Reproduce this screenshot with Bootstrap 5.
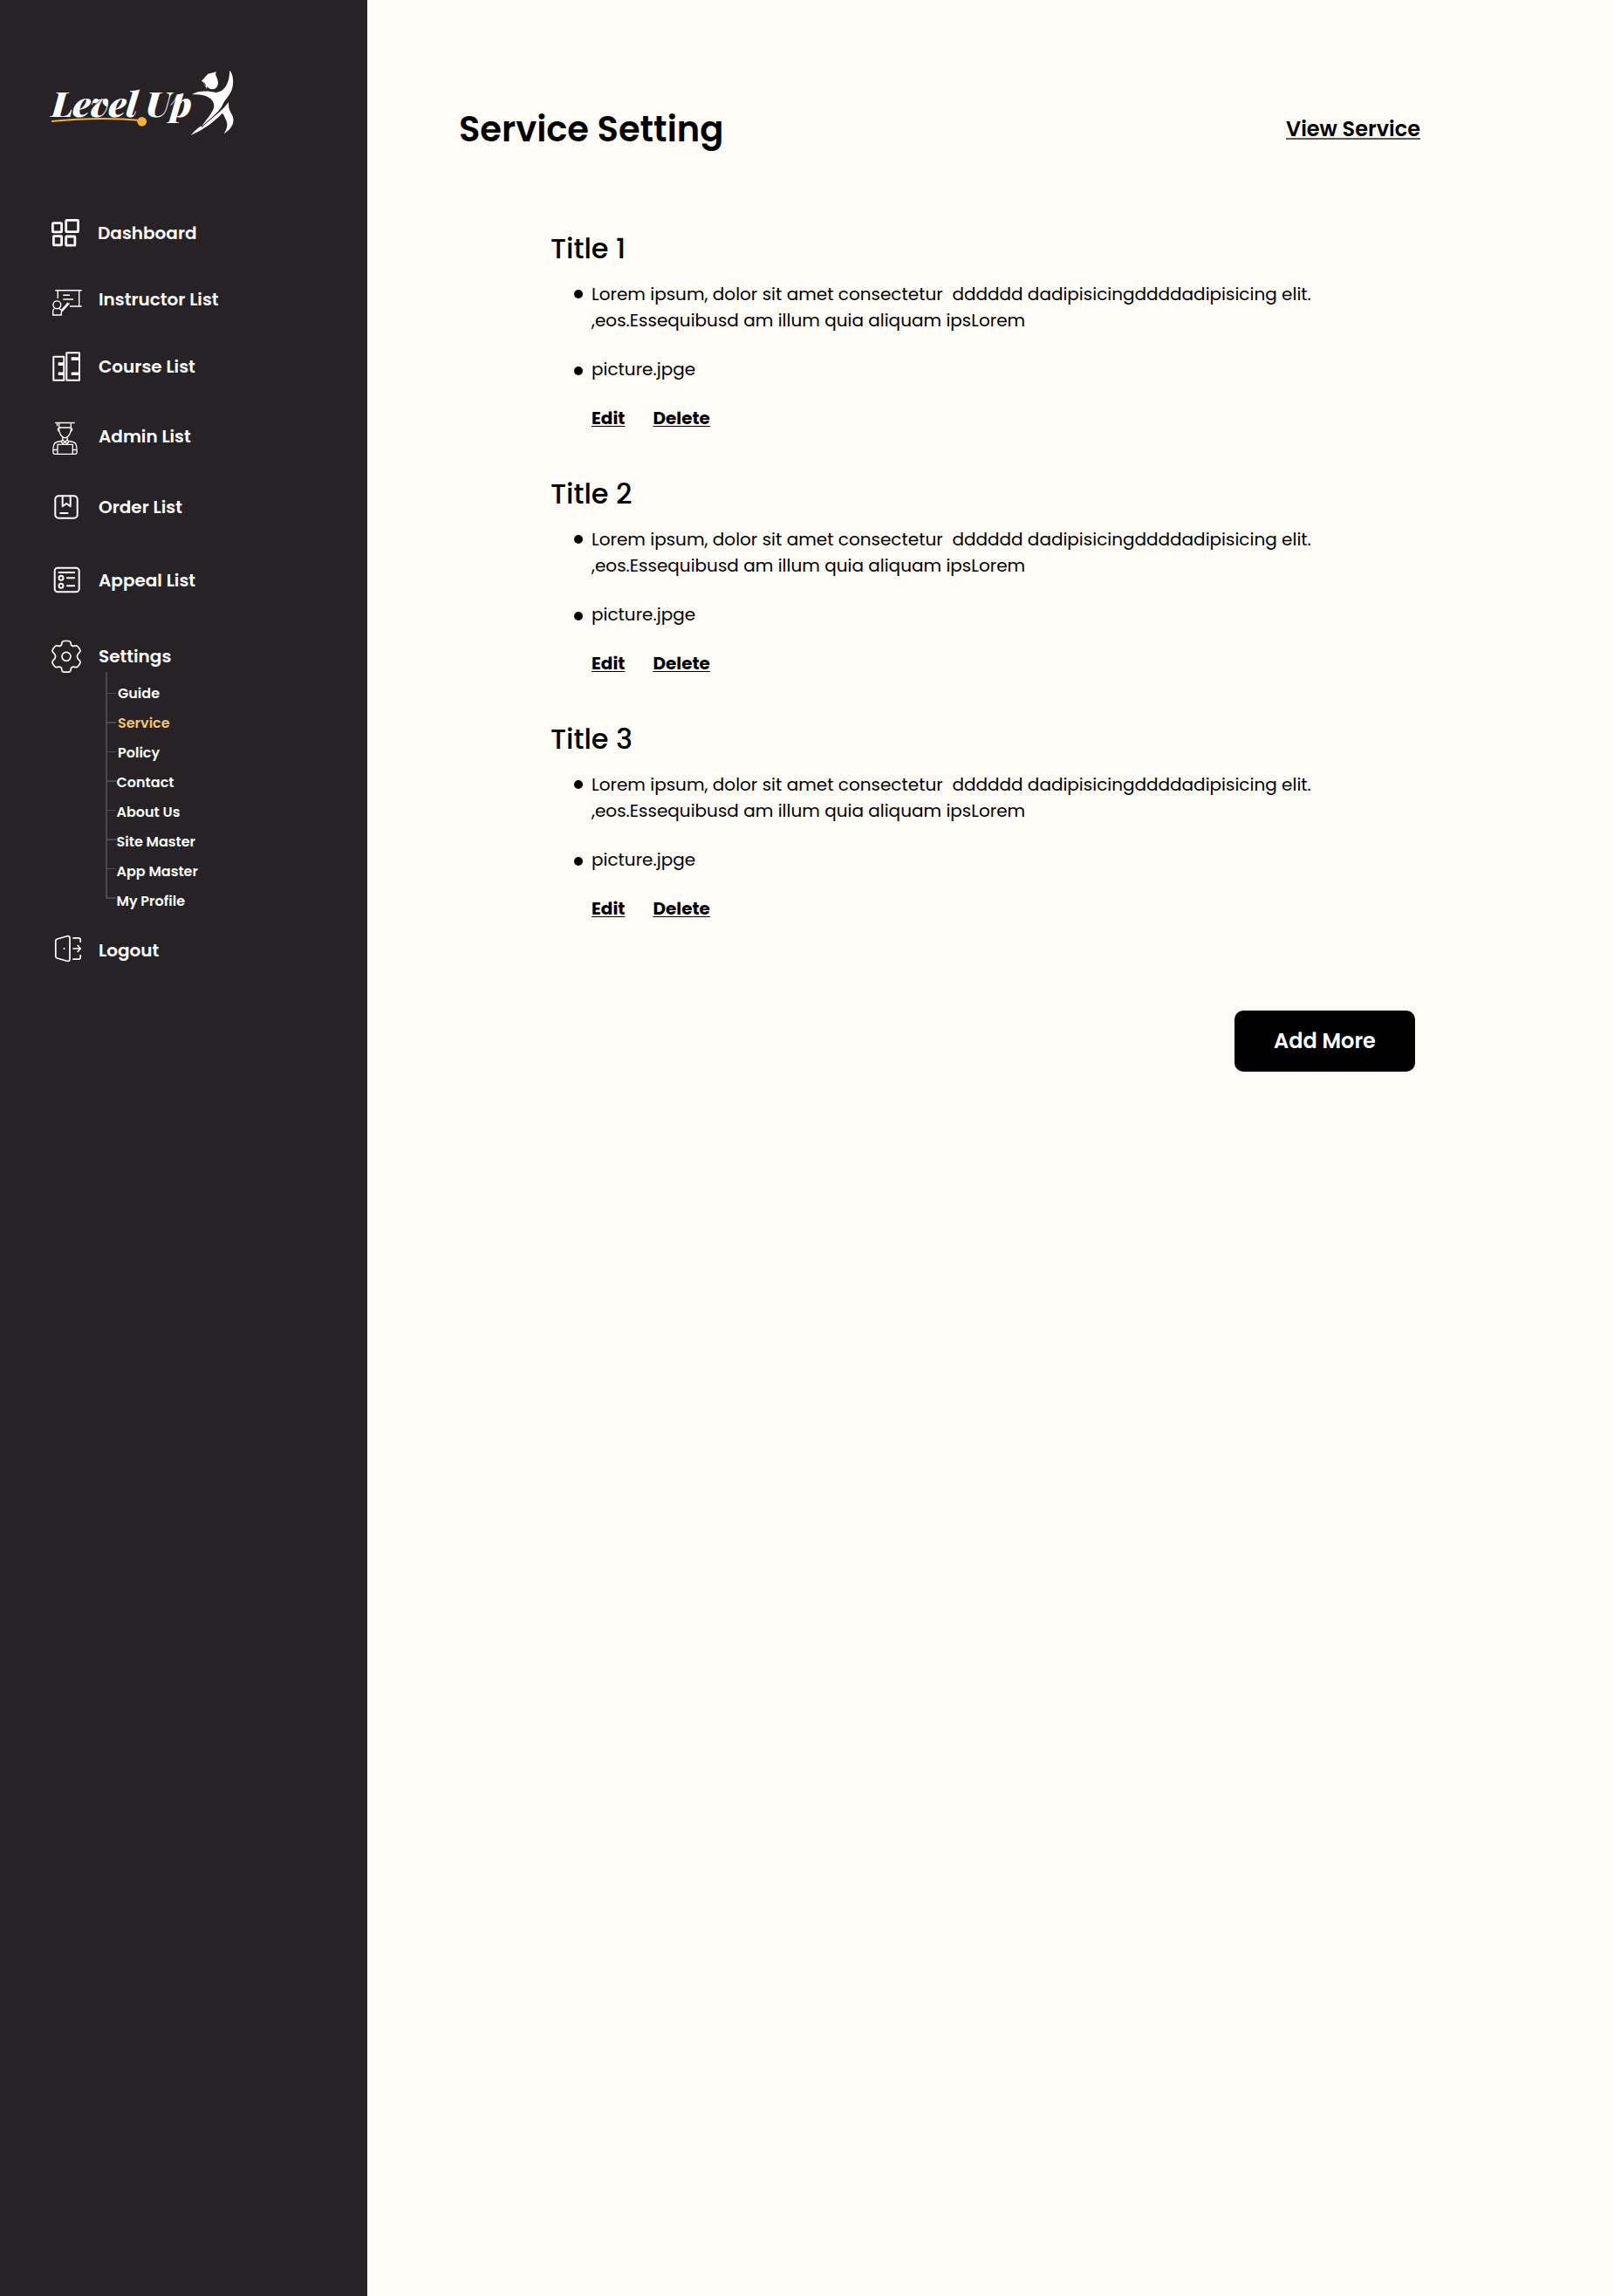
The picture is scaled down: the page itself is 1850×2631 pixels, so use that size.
<!DOCTYPE html>
<html lang="en">
<head>
<meta charset="utf-8">
<meta name="viewport" content="width=device-width, initial-scale=1">
<title>Service Setting</title>
<link rel="stylesheet" href="https://cdn.jsdelivr.net/npm/bootstrap@5.3.0/dist/css/bootstrap.min.css">
<style>
body{font-family:Poppins,Inter,sans-serif;background:#fffbf6;color:#000}
.side-panel{width:421px;min-height:2631px;background:#262226;padding:78px 0 0 57px}
.brand-logo{display:block;width:214px;height:80px;margin-bottom:89px}
.side-link{height:40px;gap:19px;padding-left:1px;color:#fff;font-size:20px;font-weight:600;line-height:30px;text-decoration:none}
.side-link.tight{gap:18px}
.side-link svg{width:36px;height:40px;flex:none;overflow:visible;fill:none;stroke:#fff;stroke-width:2}
.g36{margin-bottom:36px}.g37{margin-bottom:37px}.g40{margin-bottom:40px}.g41{margin-bottom:41px}.g44{margin-bottom:44px}.g47{margin-bottom:47px}
.tree-lines{width:14px;height:260px;margin:-2px 0 0 64px;flex:none;fill:#4b494b}
.sub-menu{margin:6px 0 19px -1.5px}
.sub-menu a{display:block;color:#fff;font-size:16px;font-weight:600;line-height:34px;text-decoration:none}
.sub-menu .shifted{padding-left:1.5px}
.sub-menu a.current{color:#f5c26b}
.main-area{padding:118px 222px 0 105px}
.page-title{font-size:40px;font-weight:600;line-height:60px}
.view-link{font-size:24px;font-weight:600;line-height:36px;color:#000;text-decoration:underline #5b5a57 2px;text-underline-offset:2px;text-decoration-skip-ink:none}
.service-list{margin:83px 0 0 105px}
.service-item{margin-bottom:48px}
.service-item h2{font-size:32px;font-weight:500;line-height:48px;margin-bottom:13px}
.service-item ul{padding-left:27px;font-size:20px;line-height:30px}
.service-item li{gap:10px;margin-bottom:26px}
.service-item li::before{content:"";flex:none;width:10px;height:10px;border-radius:50%;background:#000;margin-top:10px}
.service-item li+li::before{margin-top:12px}
.service-item li span{white-space:pre}
.item-actions{padding-left:47px;gap:32px;line-height:30px;font-size:20px}
.item-actions a{color:#000;font-weight:700;text-decoration:underline 1px;text-underline-offset:2px;text-decoration-skip-ink:none}
.add-btn,.add-btn:hover{width:207px;height:70px;margin:54px 6px 0 0;background:#000;color:#fff;border:0;border-radius:10px;font-size:24px;font-weight:600}
</style>
<script src="https://cdn.jsdelivr.net/npm/bootstrap@5.3.0/dist/js/bootstrap.bundle.min.js"></script>
</head>
<body>
<div class="d-flex">
<aside class="side-panel flex-shrink-0">
  <svg class="brand-logo" viewBox="57 78 214 80" role="img" aria-label="Level Up">
    <g fill="#fff" font-family="'Playfair Display','Liberation Serif',serif" font-weight="900" font-style="italic" font-size="38.500">
      <text x="59" y="134" textLength="98.500" lengthAdjust="spacingAndGlyphs">Level</text>
      <text x="166.700" y="134" textLength="53" lengthAdjust="spacingAndGlyphs">Up</text>
    </g>
    <path d="M59 139C95 135.500 130 135 162 138" fill="none" stroke="#f3b03c" stroke-width="2.200"/>
    <circle cx="162.700" cy="139.300" r="5.400" fill="#f3b03c"/>
    <g fill="#fff" transform="translate(215 76) scale(.3333)">
      <path d="M48 50L70 26L99 19L96 27C98 35 105 45 105 57C104 70 97 78 86 79C76 78 70 74 68 68L66 77L53 54Z"/>
      <path d="M12 237C30 213 60 195 85 177C110 160 130 138 141 123C141 142 143 150 152 165C165 190 155 212 125 232C140 207 138 195 130 180C125 167 122 162 118 163C95 188 60 215 12 237Z"/>
      <path d="M15 97C38 82 72 84 98 90C128 86 143 60 145 14C155 25 160 50 154 74C149 97 126 116 118 137C108 156 75 182 48 207C60 188 88 160 91 138C92 110 62 93 15 97Z" stroke="#262226" stroke-width="6" paint-order="stroke"/>
      <path d="M56 55L62 66" stroke="#262226" stroke-width="3"/>
    </g>
  </svg>
  <nav class="d-flex flex-column">
    <a href="#" class="side-link tight d-flex align-items-center g36"><svg viewBox="0 0 36 40" stroke-linejoin="round"><g stroke-width="2.800"><rect x="2.400" y="8.700" width="10.200" height="10.200" rx=".8"/><rect x="17.700" y="5.400" width="13.900" height="13.200" rx=".8"/><rect x="3.400" y="23.700" width="9.200" height="10.200" rx=".8"/><rect x="17.700" y="24" width="10.200" height="10.200" rx=".8"/></g></svg><span>Dashboard</span></a>
    <a href="#" class="side-link d-flex align-items-center g37"><svg viewBox="0 0 36 40"><g stroke-width="1.400"><path d="M5.300 9.700H35.700M8.300 9.700V19M32.700 9.700V28M22 28H35.700M14.300 15.200H22M14.300 20H26"/><circle cx="7.300" cy="26.300" r="4.400"/><path d="M4.500 30.500Q2.700 31.500 2.700 33.500V38H12.300V34.500L21.500 24.500M10 30.500L12.500 32.500L20 24"/></g></svg><span>Instructor List</span></a>
    <a href="#" class="side-link d-flex align-items-center g40"><svg viewBox="0 0 36 40" stroke-linejoin="round"><rect x="3.300" y="8.700" width="12" height="27"/><rect x="18.300" y="4.300" width="14.700" height="31.400"/><path d="M8.700 15.300H15V19H8.700ZM8.700 26.500H15V30H8.700ZM23.700 9.300H33V13H23.700ZM23.700 26.500H33V30H23.700Z" fill="#fff" stroke="none"/></svg><span>Course List</span></a>
    <a href="#" class="side-link d-flex align-items-center g41"><svg viewBox="0 0 36 40"><g stroke-width="1.300" stroke-linejoin="round"><path d="M5.300 4.500H27.700M7.500 4.500V8.300M9.700 4.500V13Q10.500 18 13.500 20.500Q16.500 23 19.500 20.500Q22.500 18 23.300 13V4.500M9.700 10H23.300M9.500 10.500Q7.800 11 8.500 13Q9 14.300 10 14M23.500 10.500Q25.200 11 24.500 13Q24 14.300 23 14M13.800 21V24L16.500 26.500L19.200 24V21M13.500 24L12.500 26.500L14 28.500L16.500 26.500L19 28.500L20.500 26.500L19.500 24"/><path d="M12.500 25.500Q5.500 26 4 29Q2.800 32 2.800 37.500Q2.800 40.300 5 40.300H28Q30.200 40.300 30.200 37.500Q30.200 32 29 29Q27.500 26 20.500 25.500M8 40V29.300H25.300V40M3 35.500H8M25.300 35.500H30"/></g></svg><span>Admin List</span></a>
    <a href="#" class="side-link d-flex align-items-center g44"><svg viewBox="0 0 36 40" stroke-linejoin="round" stroke-linecap="round"><rect x="5.300" y="7.300" width="25.400" height="25.400" rx="4"/><path d="M13.700 7.500V19.300L18.200 16L22.700 19.300V7.500M11.200 27H19.500"/></svg><span>Order List</span></a>
    <a href="#" class="side-link d-flex align-items-center g47"><svg viewBox="0 0 36 40" stroke-linecap="round"><rect x="4.700" y="5.700" width="28" height="27.600" rx="3.500"/><path d="M9.500 11H27.200M19 17.300H27.200M19 26.300H27.200"/><circle cx="12" cy="17.300" r="2.500"/><circle cx="12" cy="26.300" r="2.500"/></svg><span>Appeal List</span></a>
    <a href="#" class="side-link d-flex align-items-center"><svg viewBox="0 0 36 40"><g transform="translate(18 20.300)" stroke-width="1.700" stroke="#fffbf0"><path d="M-7.500-11.900C-5.800-12.200-5.300-13.300-5.200-15C-5.100-17-4-17.800-2.200-17.800H2.200C4-17.800 5.100-17 5.200-15C5.300-13.300 5.800-12.200 7.500-11.900C9.200-11.600 10.500-12.600 11.800-12.300C13.500-11.800 15.800-8.200 16.100-6.500C16.200-4.500 12.400-3.500 12.400 0C12.400 3.500 16.200 4.500 16.100 6.500C15.800 8.200 13.500 11.800 11.800 12.300C10.500 12.600 9.200 11.600 7.500 11.900C5.800 12.200 5.300 13.300 5.200 15C5.100 17 4 17.800 2.200 17.800H-2.200C-4 17.800-5.100 17-5.200 15C-5.300 13.300-5.800 12.200-7.500 11.900C-9.200 11.600-10.500 12.600-11.800 12.300C-13.500 11.800-15.800 8.200-16.100 6.500C-16.200 4.500-12.400 3.500-12.400 0C-12.400-3.500-16.200-4.500-16.100-6.500C-15.800-8.200-13.500-11.800-11.800-12.300C-10.500-12.600-9.200-11.600-7.500-11.900Z"/><circle r="5"/></g></svg><span>Settings</span></a>
    <div class="d-flex">
      <svg class="tree-lines" viewBox="121 770 14 260"><path d="M121 770h2v260h-2zM123 794h10v1h-10zM123 827h10v2h-10zM123 861h10v1h-10zM123 894h10v2h-10zM123 928h10v1h-10zM123 961h10v2h-10zM123 995h10v1h-10zM123 1028h10v2h-10z"/></svg>
      <div class="sub-menu">
        <a href="#" class="shifted">Guide</a>
        <a href="#" class="shifted current">Service</a>
        <a href="#" class="shifted">Policy</a>
        <a href="#">Contact</a>
        <a href="#">About Us</a>
        <a href="#">Site Master</a>
        <a href="#">App Master</a>
        <a href="#">My Profile</a>
      </div>
    </div>
    <a href="#" class="side-link d-flex align-items-center"><svg viewBox="0 0 36 40" stroke-linejoin="round"><g stroke-width="1.700"><path d="M7.500 7L18.800 3.800Q22 3 22 6V30Q22 33 18.800 32.200L7.500 29Q5.800 28.500 5.800 26.800V9.200Q5.800 7.500 7.500 7ZM25.300 5.800H32Q34.200 5.800 34.200 8V11M25.300 30.200H32Q34.200 30.200 34.200 28V25M25.300 18H34M30.700 14L34.300 18L30.700 22"/><circle cx="15.500" cy="18" r="1" fill="#fff" stroke="none"/></g></svg><span>Logout</span></a>
  </nav>
</aside>
<main class="main-area flex-grow-1">
  <header class="d-flex justify-content-between align-items-center">
    <h1 class="page-title mb-0">Service Setting</h1>
    <a href="#" class="view-link">View Service</a>
  </header>
  <div class="service-list">
    <section class="service-item">
      <h2>Title 1</h2>
      <ul class="list-unstyled mb-0">
        <li class="d-flex"><span>Lorem ipsum, dolor sit amet consectetur  dddddd dadipisicingddddadipisicing elit.
,eos.Essequibusd am illum quia aliquam ipsLorem</span></li>
        <li class="d-flex"><span>picture.jpge</span></li>
      </ul>
      <div class="item-actions d-flex"><a href="#">Edit</a><a href="#">Delete</a></div>
    </section>
    <section class="service-item">
      <h2>Title 2</h2>
      <ul class="list-unstyled mb-0">
        <li class="d-flex"><span>Lorem ipsum, dolor sit amet consectetur  dddddd dadipisicingddddadipisicing elit.
,eos.Essequibusd am illum quia aliquam ipsLorem</span></li>
        <li class="d-flex"><span>picture.jpge</span></li>
      </ul>
      <div class="item-actions d-flex"><a href="#">Edit</a><a href="#">Delete</a></div>
    </section>
    <section class="service-item">
      <h2>Title 3</h2>
      <ul class="list-unstyled mb-0">
        <li class="d-flex"><span>Lorem ipsum, dolor sit amet consectetur  dddddd dadipisicingddddadipisicing elit.
,eos.Essequibusd am illum quia aliquam ipsLorem</span></li>
        <li class="d-flex"><span>picture.jpge</span></li>
      </ul>
      <div class="item-actions d-flex"><a href="#">Edit</a><a href="#">Delete</a></div>
    </section>
  </div>
  <div class="d-flex justify-content-end"><button type="button" class="btn add-btn">Add More</button></div>
</main>
</div>
</body>
</html>
